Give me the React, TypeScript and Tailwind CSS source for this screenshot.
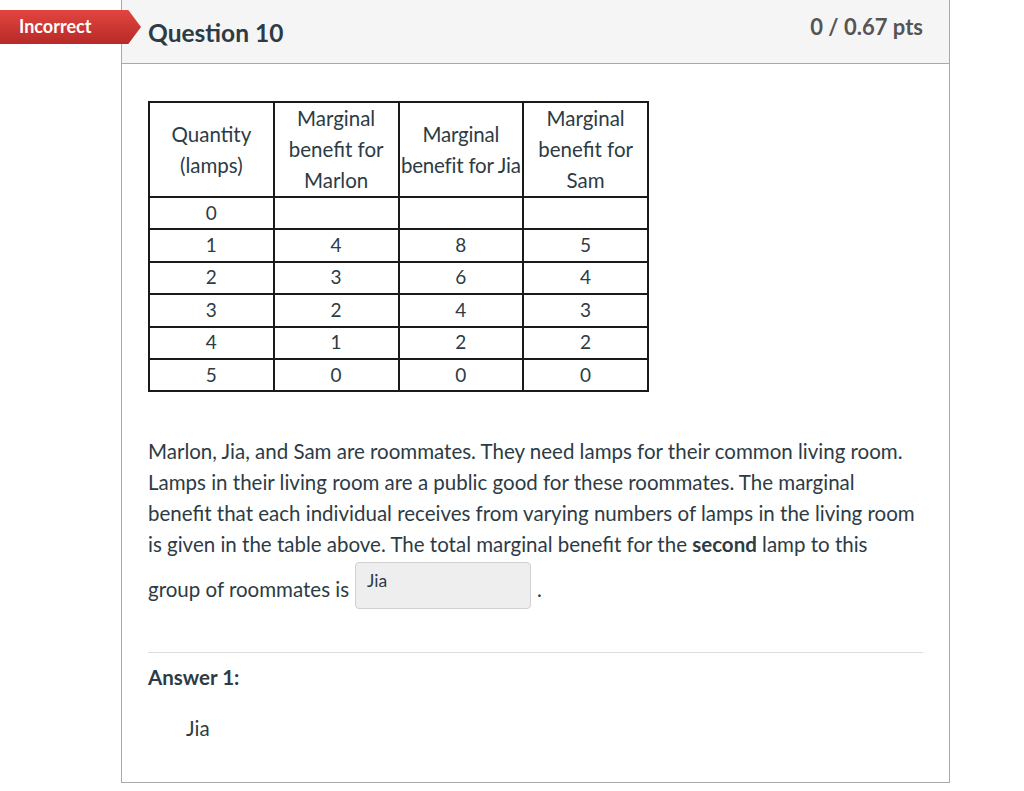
const rows = [
  ["0", "", "", ""],
  ["1", "4", "8", "5"],
  ["2", "3", "6", "4"],
  ["3", "2", "4", "3"],
  ["4", "1", "2", "2"],
  ["5", "0", "0", "0"],
];

const cell = "border-2 border-[#1a1a1a] text-center align-middle px-0";

export default function App() {
  return (
    <div
      className="relative w-full h-[791px] bg-white text-[#2d3b45] overflow-hidden"
      style={{ fontFamily: "Lato, 'Open Sans', sans-serif" }}
    >
      {/* result badge */}
      <div className="absolute left-0 top-[10px] h-[34px] w-[141px] bg-gradient-to-b from-[#e2453f] to-[#b72a28] [clip-path:polygon(0_0,91%_0,100%_50%,91%_100%,0_100%)] flex items-center pl-[19px] z-10">
        <span className="text-white font-bold text-[18px] leading-none -mt-[2px]">Incorrect</span>
      </div>

      <div className="ml-[121px] w-[829px] h-[783px] border-x border-b border-[#a9a9a9]">
        <div className="h-[64px] bg-[#f5f5f5] border-b border-[#a9a9a9] flex items-center justify-between pl-[26px] pr-[26px]">
          <h2 className="text-[24.5px] font-bold text-[#2d3b45] mt-[3px]">Question 10</h2>
          <span className="text-[22px] font-bold text-[#555] -mt-[10px]">0 / 0.67 pts</span>
        </div>

        <div className="px-[26px]">
          <table className="mt-[37px] border-collapse w-[501px] text-[20.5px] table-fixed">
            <thead>
              <tr className="h-[94px] leading-[31px]">
                <th className={cell + " font-normal"}>Quantity<br />(lamps)</th>
                <th className={cell + " font-normal"}>Marginal<br />benefit for<br />Marlon</th>
                <th className={cell + " font-normal whitespace-nowrap tracking-[-0.2px]"}>Marginal<br />benefit for Jia</th>
                <th className={cell + " font-normal"}>Marginal<br />benefit for<br />Sam</th>
              </tr>
            </thead>
            <tbody>
              {rows.map((r, i) => (
                <tr key={i} className="h-[32.4px] text-[19px] leading-none">
                  {r.map((v, j) => (
                    <td key={j} className={cell + " pb-[2px]"}>{v}</td>
                  ))}
                </tr>
              ))}
            </tbody>
          </table>

          <p className="mt-[44px] text-[20.5px] leading-[31px] whitespace-nowrap">
            Marlon, Jia, and Sam are roommates. They need lamps for their common living room.<br />
            Lamps in their living room are a public good for these roommates. The marginal<br />
            benefit that each individual receives from varying numbers of lamps in the living room<br />
            is given in the table above. The total marginal benefit for the <b>second</b> lamp to this
          </p>
          <div className="flex items-start text-[20.5px] leading-[31px] mt-[2px]">
            <span className="mt-[12px]">group of roommates is</span>
            <span className="ml-[6px] w-[176px] h-[47px] bg-[#eeeeee] border border-[#d0d0d0] rounded-[4px] text-[17.5px] pl-[11px] pt-[9px] leading-none">Jia</span>
            <span className="ml-[6px] mt-[12px]">.</span>
          </div>

          <div className="mt-[43px] border-t border-[#dddddd]" />
          <div className="mt-[9px] text-[20.5px] font-bold">Answer 1:</div>
          <div className="mt-[20px] ml-[38px] text-[20.5px]">Jia</div>
        </div>
      </div>
    </div>
  );
}
